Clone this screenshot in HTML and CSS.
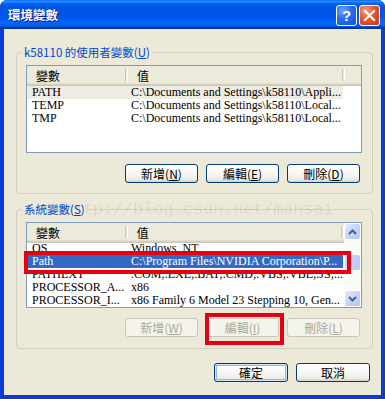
FILE: index.html
```html
<!DOCTYPE html>
<html lang="zh-Hant">
<head>
  <meta charset="UTF-8" />
  <title>環境變數</title>
  <link rel="stylesheet" href="styles.css">
</head>
<body>
  <div class="window">
    <div class="titlebar">
      <span class="title">環境變數</span>
      <div class="caption">
        <span class="cap help">?</span>
        <span class="cap close">
          <svg width="13" height="13" viewBox="0 0 13 13"><path d="M2 2 L11 11 M11 2 L2 11" stroke="#fff" stroke-width="2.2" stroke-linecap="square"/></svg>
        </span>
      </div>
    </div>

    <div class="body">
      <!-- 使用者變數 -->
      <fieldset class="group first">
        <legend>k58110 的使用者變數(<u>U</u>)</legend>
        <div class="lv user">
          <div class="lv-main">
            <div class="lv-head">
              <div class="col name">變數</div>
              <span class="sep"></span>
              <div class="col value">值</div>
              <span class="sep"></span>
            </div>
            <div class="lv-rows">
              <div class="row dim"><span class="c1">PATH</span><span class="c2">C:\Documents and Settings\k58110\Appli...</span></div>
              <div class="row"><span class="c1">TEMP</span><span class="c2">C:\Documents and Settings\k58110\Local...</span></div>
              <div class="row"><span class="c1">TMP</span><span class="c2">C:\Documents and Settings\k58110\Local...</span></div>
            </div>
          </div>
        </div>
        <div class="btnrow">
          <div class="btn">新增(<u>N</u>)</div>
          <div class="btn">編輯(<u>E</u>)</div>
          <div class="btn">刪除(<u>D</u>)</div>
        </div>
      </fieldset>

      <!-- 系統變數 -->
      <fieldset class="group second">
        <legend>系統變數(<u>S</u>)</legend>
        <div class="lv sys">
          <div class="lv-main">
            <div class="lv-head">
              <div class="col name">變數</div>
              <span class="sep"></span>
              <div class="col value">值</div>
              <span class="sep"></span>
            </div>
            <div class="lv-rows">
              <div class="row scrolled"><span class="c1">OS</span><span class="c2">Windows_NT</span></div>
              <div class="row sel"><span class="c1">Path</span><span class="c2">C:\Program Files\NVIDIA Corporation\P...</span></div>
              <div class="row"><span class="c1">PATHEXT</span><span class="c2">.COM;.EXE;.BAT;.CMD;.VBS;.VBE;.JS;...</span></div>
              <div class="row"><span class="c1">PROCESSOR_A...</span><span class="c2">x86</span></div>
              <div class="row"><span class="c1">PROCESSOR_I...</span><span class="c2">x86 Family 6 Model 23 Stepping 10, Gen...</span></div>
            </div>
          </div>
          <div class="sb">
            <div class="sb-btn"><svg width="9" height="6" viewBox="0 0 9 6"><path d="M1 5 L4.5 1.5 L8 5" fill="none" stroke="#4D6185" stroke-width="2"/></svg></div>
            <div class="sb-track">
              <div class="sb-thumb"></div>
            </div>
            <div class="sb-btn"><svg width="9" height="6" viewBox="0 0 9 6"><path d="M1 1 L4.5 4.5 L8 1" fill="none" stroke="#4D6185" stroke-width="2"/></svg></div>
          </div>
        </div>
        <div class="btnrow">
          <div class="btn off">新增(<u>W</u>)</div>
          <div class="btn off">編輯(<u>I</u>)</div>
          <div class="btn off">刪除(<u>L</u>)</div>
        </div>
      </fieldset>

      <div class="btnrow dialog">
        <div class="btn default">確定</div>
        <div class="btn">取消</div>
      </div>
    </div>

    <div class="watermark">http://blog.csdn.net/mansai</div>
    <div class="redbox on-row"></div>
    <div class="redbox on-btn"></div>
  </div>
</body>
</html>
```

FILE: styles.css
```css
body {
  margin: 0;
  background: #fff;
  font-family: "Noto Sans CJK TC", sans-serif;
  font-size: 12px;
}
.window {
  position: relative;
  width: 385px;
  height: 399px;
  display: flex;
  flex-direction: column;
  background: #0A3BD6;
  border-radius: 7px 7px 0 0;
  overflow: hidden;
}

/* title bar */
.titlebar {
  height: 29px;
  flex: none;
  display: flex;
  align-items: center;
  justify-content: space-between;
  padding: 0 5px 0 8px;
  background: linear-gradient(to bottom, #0058EE 0%, #3593FF 4%, #288EFF 6%, #127DFF 8%, #036FFC 10%, #0262EE 14%, #0057E5 20%, #0054E3 24%, #0055EB 56%, #005BF5 66%, #026AFE 76%, #0062EF 86%, #0052D6 92%, #0040AB 94%, #003092 100%);
}
.title {
  color: #fff;
  font-weight: bold;
  font-size: 12.5px;
  text-shadow: 1px 1px #0F1089;
}
.caption {
  display: flex;
  gap: 2px;
  margin-top: 1px;
}
.cap {
  width: 21px;
  height: 21px;
  box-sizing: border-box;
  border: 1px solid #fff;
  border-radius: 3px;
  display: flex;
  align-items: center;
  justify-content: center;
  color: #fff;
  font: bold 15px "Liberation Sans", sans-serif;
}
.help {
  background: radial-gradient(circle at 30% 25%, #6FA2FF 0%, #2A6BF0 45%, #1450DC 100%);
}
.close {
  background: radial-gradient(circle at 30% 25%, #F0A080 0%, #E2582F 45%, #C5361A 100%);
}

/* dialog body */
.body {
  flex: 1;
  margin: 0 4px 4px 4px;
  background: #ECE9D8;
  padding-top: 16px;
}
.group {
  margin: 0 8px 0 12px;
  border: 1px solid #D0D0BF;
  border-radius: 4px;
  padding: 6px 10px 10px 9px;
  min-width: 0;
}
.group legend {
  color: #0046D5;
  font-size: 11.5px;
  line-height: 14px;
  padding: 0 2px;
  margin-left: -4px;
}
.group.second {
  margin-top: 8px;
  padding-bottom: 11px;
}

/* list views */
.lv {
  box-sizing: border-box;
  border: 1px solid #7F9DB9;
  background: #fff;
  display: flex;
  overflow: hidden;
}
.lv.user { height: 88px; }
.lv.sys { height: 86px; }
.lv-main {
  flex: 1;
  min-width: 0;
  display: flex;
  flex-direction: column;
}
.lv-head {
  height: 20px;
  flex: none;
  display: flex;
  align-items: stretch;
  background: linear-gradient(to bottom, #EBEADB 0, #EBEADB 17px, #E2DECD 17px, #E2DECD 18px, #D6D2C2 18px, #D6D2C2 19px, #CBC7B8 19px);
}
.lv-head .col {
  display: flex;
  align-items: center;
  padding-left: 9px;
  padding-bottom: 2px;
  box-sizing: border-box;
}
.col.name { width: 98px; }
.col.value { width: 214px; }
.sep {
  width: 1px;
  margin: 3px 0 5px;
  border-left: 1px solid #C7C5B2;
  border-right: 1px solid #fff;
}
.lv-rows {
  flex: 1;
  overflow: hidden;
  font-family: "Liberation Serif", "Noto Sans CJK TC", serif;
  font-size: 12px;
}
.row {
  width: 316px;
  height: 13px;
  line-height: 13px;
  display: flex;
  white-space: nowrap;
  color: #000;
}
.row.scrolled { margin-top: -1px; }
.row.dim { background: #EEECE3; }
.row.sel {
  background: #316AC5;
  color: #fff;
}
.c1 {
  width: 99px;
  padding-left: 5px;
  box-sizing: border-box;
  overflow: hidden;
}
.c2 {
  flex: 1;
  padding-left: 5px;
  overflow: hidden;
}

/* scrollbar */
.sb {
  width: 17px;
  flex: none;
  display: flex;
  flex-direction: column;
  background: #FAFAF6;
}
.sb-btn {
  height: 17px;
  flex: none;
  box-sizing: border-box;
  border: 1px solid #fff;
  border-radius: 3px;
  background: linear-gradient(135deg, #E4EBFE 0%, #C4D4FC 50%, #B2C6F7 100%);
  display: flex;
  align-items: center;
  justify-content: center;
}
.sb-track {
  flex: 1;
  padding-top: 14px;
}
.sb-thumb {
  height: 17px;
  box-sizing: border-box;
  border: 1px solid #fff;
  border-radius: 3px;
  background: linear-gradient(90deg, #C9D8FC, #B9CCF8);
}

/* buttons */
.btnrow {
  display: flex;
  justify-content: flex-end;
  gap: 8px;
  margin-top: 11px;
  padding-right: 2px;
}
.second .btnrow { margin-top: 10px; }
.btnrow.dialog {
  margin: 14px 9px 0 0;
}
.btn {
  width: 73px;
  height: 19px;
  box-sizing: border-box;
  border: 1px solid #003C74;
  border-radius: 3px;
  background: linear-gradient(to bottom, #FFFFFF 0%, #F6F6F2 55%, #ECEBE6 85%, #D6D0C5 100%);
  display: flex;
  align-items: center;
  justify-content: center;
  font-size: 12px;
  line-height: 17px;
  color: #000;
}
.dialog .btn { width: 74px; }
.btn.default {
  box-shadow: inset 0 0 0 1px #CEE7FF, inset 0 0 0 2px #98B4EA;
}
.btn.off {
  border-color: #C9C7BA;
  background: #F5F4EA;
  color: #ACA899;
}

/* overlays drawn on top of the screenshot */
.watermark {
  position: absolute;
  left: 63px;
  top: 200px;
  font-family: "Liberation Mono", monospace;
  font-size: 16.7px;
  line-height: 20px;
  color: rgba(0, 0, 0, 0.08);
  white-space: nowrap;
}
.redbox {
  position: absolute;
  box-sizing: border-box;
  border: 4px solid #E5000F;
}
.redbox.on-row {
  left: 24px;
  top: 251px;
  width: 327px;
  height: 23px;
}
.redbox.on-btn {
  left: 205px;
  top: 313px;
  width: 79px;
  height: 32px;
}
```
